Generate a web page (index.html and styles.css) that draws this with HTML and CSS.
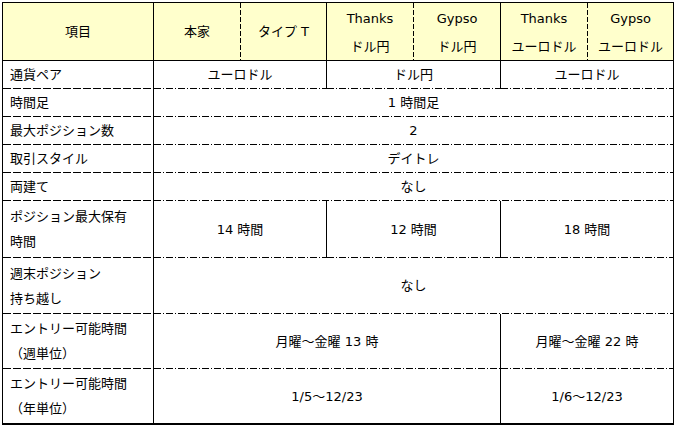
FILE: index.html
```html
<!DOCTYPE html>
<html lang="ja">
<head>
<meta charset="utf-8">
<title>比較表</title>
<link rel="stylesheet" href="styles.css">
</head>
<body>
<div class="tbl">
  <div class="c hd">項目</div>
  <div class="c hd vd">本家</div>
  <div class="c hd">タイプ T</div>
  <div class="c hd vd two"><span>Thanks</span><span>ドル円</span></div>
  <div class="c hd two"><span>Gypso</span><span>ドル円</span></div>
  <div class="c hd vd two"><span>Thanks</span><span>ユーロドル</span></div>
  <div class="c hd two"><span>Gypso</span><span>ユーロドル</span></div>

  <div class="c lbl ld">通貨ペア</div>
  <div class="c dd s2">ユーロドル</div>
  <div class="c dd s2">ドル円</div>
  <div class="c dd s2">ユーロドル</div>

  <div class="c lbl ld">時間足</div>
  <div class="c dd s6">1 時間足</div>

  <div class="c lbl ld">最大ポジション数</div>
  <div class="c dd s6">2</div>

  <div class="c lbl ld">取引スタイル</div>
  <div class="c dd s6">デイトレ</div>

  <div class="c lbl ld">両建て</div>
  <div class="c dd s6">なし</div>

  <div class="c lbl ld two"><span>ポジション最大保有</span><span>時間</span></div>
  <div class="c dd s2">14 時間</div>
  <div class="c dd s2">12 時間</div>
  <div class="c dd s2">18 時間</div>

  <div class="c lbl ld two"><span>週末ポジション</span><span>持ち越し</span></div>
  <div class="c dd s6">なし</div>

  <div class="c lbl ld two"><span>エントリー可能時間</span><span>（週単位）</span></div>
  <div class="c dd s4">月曜～金曜 13 時</div>
  <div class="c dd s2">月曜～金曜 22 時</div>

  <div class="c lbl last two"><span>エントリー可能時間</span><span>（年単位）</span></div>
  <div class="c last s4">1/5～12/23</div>
  <div class="c last s2">1/6～12/23</div>
</div>
</body>
</html>
```

FILE: styles.css
```css
html, body {
  margin: 0;
  padding: 0;
  background: #fff;
}
body {
  padding: 2px 0 0 2px;
  font-family: "DejaVu Sans", "Noto Sans CJK JP", sans-serif;
  font-size: 13px;
  color: #000;
}
.tbl {
  display: grid;
  width: 672px;
  box-sizing: border-box;
  grid-template-columns: 151px 87px 86px 87px 87px 87px 86px;
  grid-template-rows: 58px 28px 28px 28px 28px 28px 57px 56px 55px 54px;
  border-left: 1px solid #000;
  border-top: 1px solid #000;
  border-bottom: 2px solid #000;
}
.c {
  box-sizing: border-box;
  display: flex;
  align-items: center;
  justify-content: center;
  text-align: center;
  border-right: 1px solid #000;
  border-bottom: 1px solid #000;
  line-height: 25px;
  white-space: nowrap;
}
.two {
  flex-direction: column;
}
.two span {
  display: block;
}
.hd {
  background-color: #ffffcc;
  line-height: 28px;
}
.hd.two {
  padding-top: 3px;
}
.vd {
  border-right: none;
  padding-right: 1px;
  background-image: repeating-linear-gradient(180deg, #000 0 5px, transparent 5px 7px);
  background-size: 1px 100%;
  background-position: right top;
  background-repeat: no-repeat;
}
.lbl {
  justify-content: center;
  align-items: flex-start;
  text-align: left;
  padding-left: 7px;
}
.lbl:not(.two) {
  flex-direction: column;
}
.ld {
  border-bottom: none;
  padding-bottom: 1px;
  background-image: repeating-linear-gradient(90deg, #000 0 8px, transparent 8px 10px);
  background-size: 100% 1px;
  background-position: left bottom;
  background-repeat: no-repeat;
}
.dd {
  border-bottom: none;
  padding-bottom: 1px;
  background-image: repeating-linear-gradient(90deg, #000 0 7px, transparent 7px 9px, #000 9px 10px, transparent 10px 12px);
  background-size: 100% 1px;
  background-position: left bottom;
  background-repeat: no-repeat;
}
.last {
  border-bottom: none;
}
.s2 { grid-column: span 2; }
.s4 { grid-column: span 4; }
.s6 { grid-column: span 6; }
```
